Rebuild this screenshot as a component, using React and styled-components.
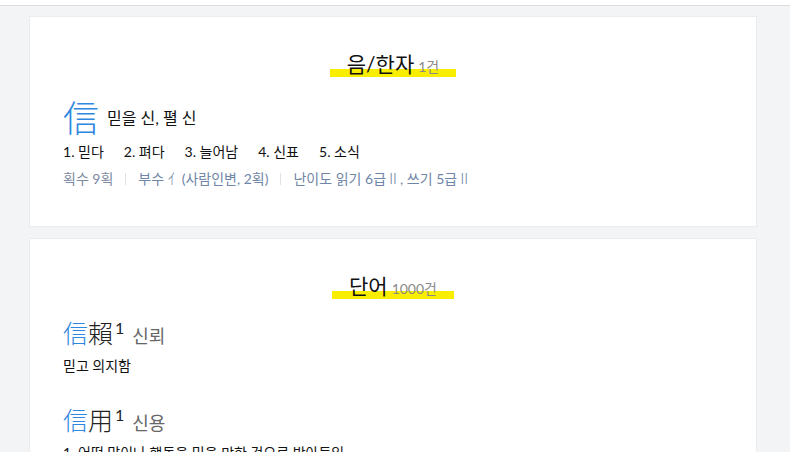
import React from "react";
import styled, { createGlobalStyle } from "styled-components";

const GlobalStyle = createGlobalStyle`
    html, body {
        margin: 0;
        padding: 0;
        background-color: #f3f4f6;
        font-family: Lato, "Noto Sans CJK KR", sans-serif;
        color: #111;
    }
`;

const TopBar = styled.div`
    height: 5px;
    background-color: #ffffff;
    border-bottom: 1px solid #dcdde0;
`;

const Page = styled.div`
    padding: 10px 33px 0 29px;
    display: flex;
    flex-direction: column;
    gap: 11px;
`;

const Card = styled.section`
    background-color: white;
    border: 1px solid #ebecee;
    padding: 33px 33px 36px;
    display: flex;
    flex-direction: column;
`;

const TitleRow = styled.div`
    display: flex;
    justify-content: center;
`;

const Title = styled.h2`
    margin: 0;
    padding: 0 17px;
    font-size: 21px;
    font-weight: 400;
    line-height: 28px;
    background: linear-gradient(
        to bottom,
        transparent 61%,
        #f9ee00 61%,
        #f9ee00 86%,
        transparent 86%
    );
`;

const Count = styled.span`
    margin-left: 4px;
    font-size: 14px;
    color: #8a8a8a;
`;

const HanjaRow = styled.div`
    margin-top: 15px;
    display: flex;
    align-items: center;
    gap: 8px;
`;

const Hanja = styled.span`
    font-family: "Noto Sans CJK KR", sans-serif;
    font-weight: 300;
    font-size: 36px;
    line-height: 40px;
    color: #2f87e0;
`;

const Sound = styled.span`
    font-size: 16px;
    margin-top: 2px;
`;

const Meanings = styled.ol`
    margin: 5px 0 0;
    padding: 0;
    list-style: none;
    display: flex;
    gap: 20px;
    font-size: 14px;
    line-height: 22px;
`;

const Meta = styled.div`
    margin-top: 4px;
    display: flex;
    align-items: center;
    font-size: 14px;
    line-height: 22px;
    color: #7d8aa0;
`;

const MetaItem = styled.span`
    color: ${(p) => p.$tone || "#7d8aa0"};
`;

const Cjk = styled.span`
    font-family: "Noto Sans CJK KR", sans-serif;
    font-weight: 300;
`;

const Divider = styled.span`
    width: 1px;
    height: 12px;
    margin: 0 12px;
    background-color: #dfe2e6;
`;

const Word = styled.div`
    margin-top: ${(p) => p.$gap}px;
    line-height: 32px;
`;

const WordHanja = styled.span`
    font-family: "Noto Sans CJK KR", sans-serif;
    font-weight: 300;
    font-size: 25px;
    color: #222;
`;

const Hit = styled.span`
    color: #2f87e0;
`;

const Sup = styled.sup`
    font-size: 16px;
    line-height: 0;
    margin-left: 2px;
    vertical-align: 9px;
    color: #222;
`;

const Reading = styled.span`
    margin-left: 8px;
    font-size: 18px;
    color: #666;
`;

const Def = styled.p`
    margin: 2px 0 0;
    font-size: 14px;
    line-height: 22px;
`;

const meanings = ["믿다", "펴다", "늘어남", "신표", "소식"];

const words = [
    { rest: "賴", reading: "신뢰", def: "믿고 의지함" },
    { rest: "用", reading: "신용", def: "1. 어떤 말이나 행동을 믿을 만한 것으로 받아들임" },
];

const App = () => {
    return (
        <>
            <GlobalStyle />
            <TopBar />
            <Page>
                <Card>
                    <TitleRow>
                        <Title>
                            음/한자<Count>1건</Count>
                        </Title>
                    </TitleRow>
                    <HanjaRow>
                        <Hanja>信</Hanja>
                        <Sound>믿을 신, 펼 신</Sound>
                    </HanjaRow>
                    <Meanings>
                        {meanings.map((m, i) => (
                            <li key={m}>
                                {i + 1}. {m}
                            </li>
                        ))}
                    </Meanings>
                    <Meta>
                        <MetaItem>획수 9획</MetaItem>
                        <Divider />
                        <MetaItem $tone="#6f86a6">
                            부수 <Cjk>亻</Cjk>(사람인변, 2획)
                        </MetaItem>
                        <Divider />
                        <MetaItem $tone="#6f86a6">
                            난이도 읽기 6급<Cjk>Ⅱ</Cjk>, 쓰기 5급<Cjk>Ⅱ</Cjk>
                        </MetaItem>
                    </Meta>
                </Card>
                <Card>
                    <TitleRow>
                        <Title>
                            단어<Count>1000건</Count>
                        </Title>
                    </TitleRow>
                    {words.map((w, i) => (
                        <React.Fragment key={w.reading}>
                            <Word $gap={i === 0 ? 13 : 26}>
                                <WordHanja>
                                    <Hit>信</Hit>
                                    {w.rest}
                                </WordHanja>
                                <Sup>1</Sup>
                                <Reading>{w.reading}</Reading>
                            </Word>
                            <Def>{w.def}</Def>
                        </React.Fragment>
                    ))}
                </Card>
            </Page>
        </>
    );
};

export default App;
